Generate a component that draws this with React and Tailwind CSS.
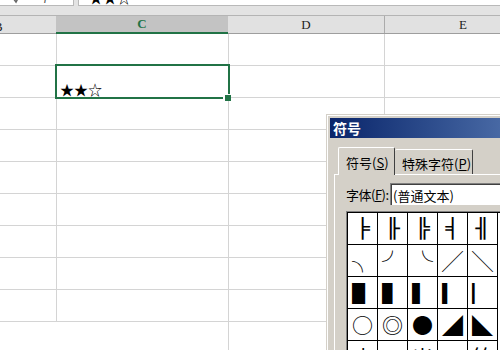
export default function App() {
  const ui = { fontFamily: '"Noto Sans CJK SC", "DejaVu Sans", sans-serif' };
  const hdr = { fontFamily: '"Liberation Serif", "DejaVu Serif", serif' };
  const sym = { fontFamily: '"Noto Sans CJK SC", "DejaVu Sans", sans-serif' };
  const mono = { fontFamily: '"DejaVu Sans Mono", monospace' };
  const rows = [0, 1, 2, 3, 4, 5, 6, 7, 8];
  const symRows = [
    ["╞", "╟", "╠", "╡", "╢"],
    ["╮", "╯", "╰", "╱", "╲"],
    ["▋", "▌", "▍", "▎", "▏"],
    ["○", "◎", "●", "◢", "◣"],
    ["丬", "", "⺌", "→", "⺮"],
  ];
  return (
    <div className="relative w-[500px] h-[350px] overflow-hidden bg-white" style={ui}>
      {/* formula bar */}
      <div className="h-[16px] bg-[#e3e3e3] border-b border-[#b4b4b4] flex gap-[4px]">
        <div className="w-[74px] h-[6px] bg-white border-r border-b border-[#b9b9b9] overflow-hidden relative">
          <svg className="absolute left-[12px] top-[-8px]" width="10" height="12" viewBox="0 0 10 12">
            <path d="M1 6 L4 10 L9 1" stroke="#666666" strokeWidth="1.5" fill="none" />
          </svg>
          <span className="absolute left-[44px] top-[-11px] text-[13px] leading-none italic text-[#555]" style={hdr}>fx</span>
        </div>
        <div className="flex-1 h-[6px] bg-white border-l border-b border-[#b9b9b9] overflow-hidden relative">
          <span className="absolute left-[10px] top-[-10px] text-[14px] leading-none text-black">★★☆</span>
        </div>
      </div>
      {/* column headers */}
      <div className="h-[18px] flex bg-[#e1e1e1] border-b border-[#9e9e9e] text-[13px]" style={hdr}>
        <div className="w-[56px] shrink-0 relative">
          <span className="absolute left-[-6px] top-[1px] text-[#222]">B</span>
        </div>
        <div className="w-[172px] shrink-0 bg-[#c3c3c3] flex items-center justify-center font-bold text-[#217346] border-b-2 border-[#217346] -mb-[1px]">C</div>
        <div className="w-[157px] shrink-0 flex items-center justify-center text-[#222] border-r border-[#ababab]">D</div>
        <div className="w-[156px] shrink-0 flex items-center justify-center text-[#222]">E</div>
      </div>
      {/* body rows */}
      {rows.map((r) => (
        <div key={r} className="h-[32px] flex border-b border-[#d4d4d4]">
          <div className="w-[57px] shrink-0 border-r border-[#d4d4d4]" />
          <div className="w-[172px] shrink-0 border-r border-[#d4d4d4] flex items-end pl-[3px] pb-[1px]">
            {r === 1 ? <span className="text-[14px] leading-none text-black">★★☆</span> : null}
          </div>
          <div className="w-[156px] shrink-0 border-r border-[#d4d4d4]" />
          <div className="flex-1" />
        </div>
      ))}
      <div className="h-[30px] flex">
        <div className="w-[229px] shrink-0 border-r border-[#d4d4d4]" />
        <div className="w-[156px] shrink-0 border-r border-[#d4d4d4]" />
        <div className="flex-1" />
      </div>

      {/* selected cell */}
      <div className="absolute left-[55px] top-[64px] w-[175px] h-[35px] border-2 border-[#217346]" />
      <div className="absolute left-[223px] top-[94px] w-[8px] h-[7px] bg-white" />
      <div className="absolute left-[225px] top-[95px] w-[6px] h-[6px] bg-[#217346]" />

      {/* dialog */}
      <div className="absolute left-[326px] top-[114px] w-[200px] h-[250px] bg-[#d4d0c8] border-l border-t border-[#d4d0c8]">
        <div className="h-full border-l border-t border-white pl-[2px] pt-[2px] flex flex-col">
          <div className="h-[20px] shrink-0 flex items-center pl-[3px] text-white font-bold text-[14px] leading-none bg-gradient-to-r from-[#0a246a] to-[#5273ad]">
            符号
          </div>
          {/* tabs */}
          <div className="flex items-end pl-[8px] mt-[8px] h-[28px] shrink-0 text-[13px] leading-none text-black">
            <div className="h-[28px] w-[57px] shrink-0 border-l border-t border-white border-r border-r-[#404040] rounded-t-[2px] pl-[7px] pt-[2px] flex items-center bg-[#d4d0c8] relative z-10 -mb-[1px] whitespace-nowrap">
              符号(<span className="underline">S</span>)
            </div>
            <div className="h-[25px] w-[78px] shrink-0 border-t border-white border-r border-r-[#404040] rounded-t-[2px] pl-[7px] pt-[2px] flex items-center whitespace-nowrap">
              特殊字符(<span className="underline">P</span>)
            </div>
          </div>
          {/* panel */}
          <div className="flex-1 ml-[4px] border-l border-t border-white pl-[11px] pt-[8px]">
            <div className="flex items-center h-[22px] text-[13px] leading-none text-black">
              <span className="w-[44px] shrink-0 whitespace-nowrap tracking-[-0.5px]">字体(<span className="underline">F</span>):</span>
              <div className="flex-1 h-[22px] border-l border-t border-[#808080] bg-white">
                <div className="h-full border-l border-t border-[#404040] flex items-center pl-[1px] whitespace-nowrap">(普通文本)</div>
              </div>
            </div>
            <div className="mt-[6px] border-l border-t border-[#808080]">
              <div className="border-l border-t border-black bg-white">
                {symRows.map((row, i) => (
                  <div key={i} className="flex h-[32px]">
                    {row.map((c, j) => (
                      <div key={j} className="w-[30px] h-[32px] border-r border-b border-black flex items-center justify-center text-[21px] leading-none text-black shrink-0" style={i === 0 ? mono : sym}>
                        {i === 0 ? <span className="inline-block scale-x-[1.25] text-[19px]">{c}</span> : c}
                      </div>
                    ))}
                    <div className="flex-1" />
                  </div>
                ))}
              </div>
            </div>
          </div>
        </div>
      </div>
    </div>
  );
}
